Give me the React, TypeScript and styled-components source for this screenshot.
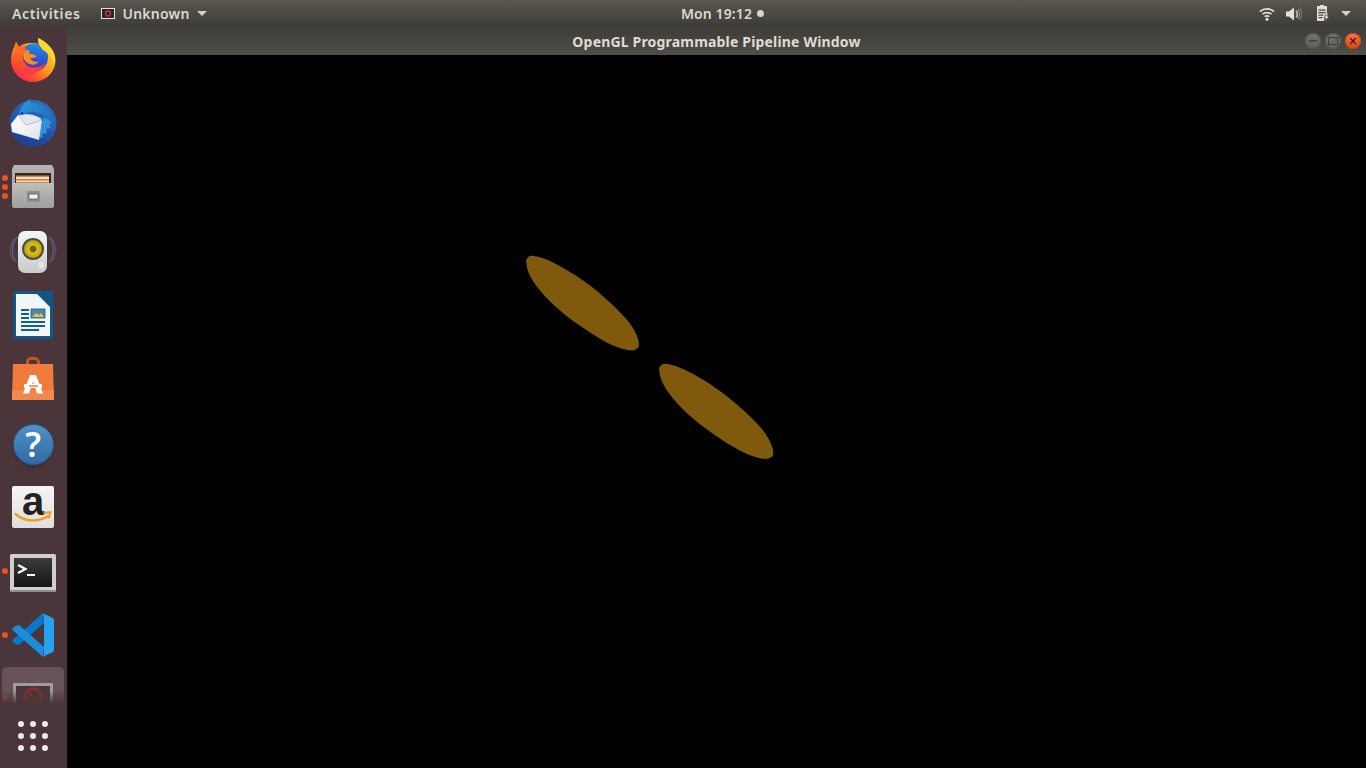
import React from 'react'
import styled, { createGlobalStyle } from 'styled-components'

const DOCK_BG = '#4a353a'

const GlobalStyle = createGlobalStyle`
  html, body {
    margin: 0;
    padding: 0;
    height: 100%;
    overflow: hidden;
    background: #000;
  }
  #root {
    height: 100%;
  }
`

const Desktop = styled.div`
  width: 1366px;
  height: 768px;
  display: flex;
  flex-direction: column;
  font-family: "Noto Sans", "Open Sans", sans-serif;
  overflow: hidden;
`

const TopBar = styled.header`
  height: 27px;
  flex: none;
  display: flex;
  align-items: center;
  background: linear-gradient(to bottom, #5a574f, #3c3b37);
  color: #dcd8d0;
  font-size: 14px;
  font-weight: 600;
`

const TopLeft = styled.div`
  flex: 0 0 681px;
  display: flex;
  align-items: center;
  padding-left: 12px;
  box-sizing: border-box;
`

const BarText = styled.span<{ $spacing?: number }>`
  letter-spacing: ${(p) => p.$spacing ?? 0.1}px;
  white-space: nowrap;
`

const AppMenu = styled.div`
  display: flex;
  align-items: center;
  gap: 7px;
  margin-left: 21px;
`

const Arrow = styled.span`
  width: 0;
  height: 0;
  border-left: 5px solid transparent;
  border-right: 5px solid transparent;
  border-top: 5px solid #d6d3cc;
`

const Clock = styled.div`
  display: flex;
  align-items: center;
  gap: 5px;
`

const Dot = styled.span`
  width: 7px;
  height: 7px;
  border-radius: 50%;
  background: #d8d6d1;
`

const TrayGroup = styled.div`
  margin-left: auto;
  display: flex;
  align-items: center;
  gap: 11px;
  padding-right: 15px;
`

const Body = styled.div`
  flex: 1;
  display: flex;
  min-height: 0;
`

const Dock = styled.nav`
  position: relative;
  flex: 0 0 67px;
  background: ${DOCK_BG};
  overflow: hidden;
`

const DockItem = styled.div<{ $active?: boolean }>`
  position: relative;
  height: 64px;
  margin: 0 3px 0 2px;
  display: flex;
  align-items: center;
  justify-content: center;
  border-radius: 5px;
  background: ${(p) => (p.$active ? '#665257' : 'transparent')};
  svg {
    display: block;
  }
`

const RunDots = styled.div`
  position: absolute;
  left: 0;
  top: 0;
  bottom: 0;
  display: flex;
  flex-direction: column;
  justify-content: center;
  gap: 3px;
`

const RunDot = styled.span<{ $dim?: boolean }>`
  width: 6px;
  height: 6px;
  border-radius: 50%;
  background: #e95420;
  opacity: ${(p) => (p.$dim ? 0.45 : 1)};
`

const HelpDisc = styled.div`
  width: 39px;
  height: 39px;
  margin-top: 2px;
  border-radius: 50%;
  display: flex;
  align-items: center;
  justify-content: center;
  background: linear-gradient(to bottom, #4f92c8, #2f6aa3);
  border: 1px solid #2a5a88;
  box-shadow: 0 3px 3px rgba(0, 0, 0, 0.12);
  color: #fff;
  font-size: 34px;
  font-weight: 600;
  line-height: 39px;
`

const AmazonTile = styled.div`
  position: relative;
  width: 42px;
  height: 42px;
  border-radius: 2px;
  display: flex;
  justify-content: center;
  background: linear-gradient(to bottom, #f4f4f2, #dededc);
  color: #222;
  font-family: "Liberation Sans", Arial, sans-serif;
  font-size: 40px;
  font-weight: 700;
  line-height: 30px;
`

const AmazonSmile = styled.svg`
  position: absolute;
  left: 0;
  top: 0;
`

const ShowApps = styled.div`
  position: absolute;
  left: 0;
  right: 0;
  bottom: 0;
  height: 78px;
  box-sizing: border-box;
  padding-top: 14px;
  display: flex;
  align-items: center;
  justify-content: center;
  background: linear-gradient(to bottom, rgba(74, 53, 58, 0) 0, ${DOCK_BG} 14px);
`

const AppGrid = styled.div`
  display: grid;
  grid-template-columns: repeat(3, 6px);
  grid-auto-rows: 6px;
  gap: 6px;
  margin-right: 1px;
`

const GridDot = styled.span`
  border-radius: 50%;
  background: #eceae7;
`

const Main = styled.main`
  flex: 1;
  display: flex;
  flex-direction: column;
  min-width: 0;
`

const TitleBar = styled.div`
  height: 28px;
  flex: none;
  display: grid;
  grid-template-columns: 1fr auto 1fr;
  align-items: center;
  background: linear-gradient(to bottom, #3d3c38, #504e47);
  color: #dfdbd2;
  font-size: 14px;
  font-weight: 700;
`

const Title = styled.span`
  grid-column: 2;
  white-space: nowrap;
  letter-spacing: 0.18px;
`

const WinButtons = styled.div`
  grid-column: 3;
  justify-self: end;
  display: flex;
  gap: 4px;
  padding-right: 5px;
`

const WinButton = styled.span<{ $close?: boolean }>`
  width: 16px;
  height: 16px;
  border-radius: 50%;
  display: flex;
  align-items: center;
  justify-content: center;
  box-shadow: inset 0 0 0 1px ${(p) => (p.$close ? '#c8431a' : '#55534d')};
  background: ${(p) =>
    p.$close
      ? 'linear-gradient(to bottom, #f5784a, #dc4414)'
      : 'linear-gradient(to bottom, #73716b, #5f5d57)'};
`

const Canvas = styled.div`
  flex: 1;
  background: #000;
  min-height: 0;
  svg {
    display: block;
    width: 100%;
    height: 100%;
  }
`

const Firefox = () => (
  <svg width="48" height="48" viewBox="0 0 48 48">
    <defs>
      <linearGradient id="ffBase" x1="0.85" y1="0.1" x2="0.2" y2="0.95">
        <stop offset="0" stopColor="#ffd42a" />
        <stop offset="0.5" stopColor="#ff9a1f" />
        <stop offset="0.8" stopColor="#ff4a2a" />
        <stop offset="1" stopColor="#f0286a" />
      </linearGradient>
      <linearGradient id="ffGlobe" x1="0.6" y1="0" x2="0.4" y2="1">
        <stop offset="0" stopColor="#1c8fe6" />
        <stop offset="0.55" stopColor="#2b55cf" />
        <stop offset="1" stopColor="#5a2bb0" />
      </linearGradient>
      <linearGradient id="ffFox" x1="0.3" y1="0" x2="0.5" y2="1">
        <stop offset="0" stopColor="#ff7a24" />
        <stop offset="0.6" stopColor="#ff5326" />
        <stop offset="1" stopColor="#fb3550" />
      </linearGradient>
    </defs>
    <path d="M29 3c6 3 11 7 14.500 12 3 5 3.500 10 2.500 15-2 9-11 17-22 17C12 47 2 37 2 25c0-5 1.500-10 3.500-14l1.500-4 3 5c3-2 7-4 12-4 3 0 6 0 8 1-1-2-1-4-1-6z" fill="url(#ffBase)" />
    <circle cx="25" cy="22.500" r="14" fill="url(#ffGlobe)" />
    <path d="M29 3c7 3 14 9 16 16 1 4 1 8 0 11-1-6-4-10-8-13-5-3-8-8-8-14z" fill="#ffd92c" />
    <path d="M7 7l3 5c2-2 4-3 6-3.500-1 3 0 6 2 8-2 1-4 3-4 6 0 5 4 10 11 10 5 0 9-2 11-5-2 7-9 12-16 12C11 40 5 32 5 24c0-6 1-12 2-17z" fill="url(#ffFox)" />
    <path d="M18 15c2 0 3 1 2.500 2.500l-1 1.500c3-.5 6 .5 8 2.500-2 1.500-4.500 2-6.500 1.500 1 3 5 4.500 9 3.500-2 3-6 4-9.500 2.500-4-1.500-6.500-5-6-9 .5-2.500 2-4 3.500-5z" fill="#ff8a24" />
  </svg>
)

const Thunderbird = () => (
  <svg width="48" height="48" viewBox="0 0 48 48">
    <defs>
      <linearGradient id="tbRing" x1="0.7" y1="0" x2="0.3" y2="1">
        <stop offset="0" stopColor="#2c6fc4" />
        <stop offset="1" stopColor="#1c3f8f" />
      </linearGradient>
      <linearGradient id="tbHead" x1="0" y1="0" x2="1" y2="1">
        <stop offset="0" stopColor="#2a9ad8" />
        <stop offset="1" stopColor="#1d5fb4" />
      </linearGradient>
      <linearGradient id="tbMail" x1="0" y1="0" x2="1" y2="1">
        <stop offset="0" stopColor="#ffffff" />
        <stop offset="1" stopColor="#dfe3ea" />
      </linearGradient>
    </defs>
    <circle cx="24" cy="24.500" r="23.500" fill="url(#tbRing)" />
    <path d="M10 17C10 9 15 3 22 0c-1 2-1 3 0 4 8 0 15 4 20 11 3 5 5 11 5 16l-5 2c1-7-2-13-8-17-7-4-15-4-24 1z" fill="url(#tbHead)" />
    <path d="M35 18l8 5-3 3 2 3-5 1 1 4-5 1 1 4-6-1-2-4 6-8z" fill="#3190dc" />
    <path d="M2 25l7-9 24 5-3 20L3 33z" fill="url(#tbMail)" />
    <path d="M9 16l8 10 16-5" fill="none" stroke="#a2a9b2" strokeWidth="0.800" />
    <path d="M10 17c7-3 15-2 23 3l-16 5z" fill="#e3e7ec" />
    <circle cx="13" cy="14" r="1" fill="#18263a" />
  </svg>
)

const FilesIcon = () => (
  <svg width="42" height="44" viewBox="0 0 42 44">
    <defs>
      <linearGradient id="fiBody" x1="0" y1="0" x2="0" y2="1">
        <stop offset="0" stopColor="#bdbdbb" />
        <stop offset="1" stopColor="#a0a09e" />
      </linearGradient>
      <linearGradient id="fiTop" x1="0" y1="0" x2="0" y2="1">
        <stop offset="0" stopColor="#b5b5b3" />
        <stop offset="1" stopColor="#8f8f8d" />
      </linearGradient>
    </defs>
    <path d="M2 0h38l2 4v36c0 2-1 3-3 3H3c-2 0-3-1-3-3V4z" fill="url(#fiTop)" />
    <rect x="3" y="8" width="36" height="11" fill="#2e2a2a" />
    <rect x="4" y="10.500" width="33" height="7" fill="#ee7b2e" />
    <rect x="4" y="12" width="33" height="2" fill="#f7ead8" />
    <rect x="4" y="15.500" width="33" height="2" fill="#f4d3a6" />
    <path d="M0 18h42v22c0 2-1 3-3 3H3c-2 0-3-1-3-3z" fill="url(#fiBody)" />
    <rect x="15" y="26" width="13" height="11" rx="1.500" fill="#8d8d8b" />
    <rect x="17" y="29" width="9" height="5" rx="1" fill="#f1f1ef" stroke="#5c5c5c" strokeWidth="0.800" />
  </svg>
)

const Rhythmbox = () => (
  <svg width="48" height="44" viewBox="0 0 48 44">
    <defs>
      <linearGradient id="rbBody" x1="0" y1="0" x2="0" y2="1">
        <stop offset="0" stopColor="#f4f7f7" />
        <stop offset="1" stopColor="#c9cbc8" />
      </linearGradient>
      <radialGradient id="rbCone">
        <stop offset="0" stopColor="#6b5f10" />
        <stop offset="0.3" stopColor="#6b5f10" />
        <stop offset="0.4" stopColor="#d9bf1c" />
        <stop offset="0.85" stopColor="#c4a914" />
        <stop offset="1" stopColor="#57522a" />
      </radialGradient>
    </defs>
    <g fill="none" stroke="#6d80b4" opacity="0.5">
      <path d="M8 8C2 15 2 27 8 34" strokeWidth="1.500" />
      <path d="M5 10C0 17 0 26 5 32" strokeWidth="1" />
      <path d="M40 8c6 7 6 19 0 26" strokeWidth="1.500" />
      <path d="M43 10c5 7 5 16 0 22" strokeWidth="1" />
    </g>
    <rect x="9" y="2" width="29" height="42" rx="7" fill="url(#rbBody)" />
    <circle cx="24" cy="20" r="11" fill="#4a4a44" />
    <circle cx="24" cy="20" r="9.500" fill="url(#rbCone)" />
    <circle cx="32" cy="36" r="4" fill="#e4e5e2" stroke="#bdbfbb" strokeWidth="0.600" />
  </svg>
)

const Writer = () => (
  <svg width="40" height="48" viewBox="0 0 40 48">
    <path d="M2 0h26l12 12v33c0 2-1 3-3 3H3c-2 0-3-1-3-3V2c0-1 1-2 2-2z" fill="#0f5788" />
    <path d="M3 3h21l13 13v29H3z" fill="#f3f6f8" />
    <path d="M28 0h11c1 0 1 1 1 1v11z" fill="#0f5788" />
    <g fill="#12608f">
      <rect x="8" y="18" width="8" height="2" />
      <rect x="8" y="22" width="8" height="2" />
      <rect x="8" y="26" width="8" height="2" />
      <rect x="8" y="30" width="24" height="2" />
      <rect x="8" y="34" width="24" height="2" />
      <rect x="8" y="38" width="18" height="2" />
    </g>
    <rect x="18" y="18" width="14" height="9" fill="#4b87ad" stroke="#155f90" strokeWidth="0.800" />
    <path d="M19 26l4-4 3 2 2-2 3 4z" fill="#e8c04a" />
  </svg>
)

const Software = () => (
  <svg width="42" height="44" viewBox="0 0 42 44">
    <defs>
      <linearGradient id="swBag" x1="0" y1="0" x2="0" y2="1">
        <stop offset="0" stopColor="#ee7d3f" />
        <stop offset="1" stopColor="#f07a38" />
      </linearGradient>
    </defs>
    <path d="M15.500 12V5c0-2 2-3.500 3.500-3.500h4c1.500 0 3.500 1.500 3.500 3.500v7" fill="none" stroke="#c9542a" strokeWidth="3" />
    <path d="M1 7h40l1 36H0z" fill="url(#swBag)" />
    <rect x="0" y="33" width="42" height="10" fill="#ef8a4c" />
    <path d="M18 18h6l7 18.500h-6l-4-12-4 12h-6z" fill="#fff" />
    <rect x="12" y="27" width="18" height="4" fill="#fff" />
    <rect x="17" y="28.300" width="9" height="1.400" fill="#ec7a3c" />
  </svg>
)

const AmazonMark = () => (
  <AmazonTile>
    a
    <AmazonSmile width="42" height="42" viewBox="0 0 42 42">
      <path d="M3.500 28c10 8.500 23 8 33 2" fill="none" stroke="#f79c1d" strokeWidth="2.400" strokeLinecap="round" />
      <path d="M31.500 27l7-1-1.500 6.500" fill="none" stroke="#f79c1d" strokeWidth="1.800" />
    </AmazonSmile>
  </AmazonTile>
)

const Terminal = () => (
  <svg width="46" height="44" viewBox="0 0 46 44">
    <defs>
      <linearGradient id="tmBg" x1="0" y1="0" x2="0" y2="1">
        <stop offset="0" stopColor="#3c3c3a" />
        <stop offset="1" stopColor="#151515" />
      </linearGradient>
    </defs>
    <g transform="translate(0 5)">
      <rect x="0" y="0" width="46" height="37" rx="1.500" fill="#cfcfcd" />
      <rect x="0" y="36" width="46" height="2" fill="#8f8f8d" />
      <rect x="4" y="4" width="38" height="29" fill="url(#tmBg)" />
      <path d="M8 11l7.500 4L8 19" fill="none" stroke="#fff" strokeWidth="2.200" />
      <rect x="17" y="20" width="8" height="2" fill="#fff" />
    </g>
  </svg>
)

const VSCode = () => (
  <svg width="42" height="44" viewBox="0 0 42 44">
    <path d="M3 31L0 27.500 31 0l1 10L7 32z" fill="#0a78c8" />
    <path d="M3 13L0 16.500 31 44l1-10L7 12z" fill="#1a8ddb" />
    <path d="M30 0l10 4.500c1 .5 2 1.500 2 3v29c0 1.500-1 2.500-2 3L30 44c1-1 2-2 2-3.500v-37C32 2 31 1 30 0z" fill="#24a2ee" />
  </svg>
)

const WindowApp = () => (
  <svg width="40" height="32" viewBox="0 0 40 32">
    <rect x="0" y="0" width="40" height="32" fill="#9f9d9b" />
    <rect x="3" y="3" width="34" height="29" fill="#46383a" />
    <circle cx="20" cy="14" r="8.500" fill="none" stroke="#85302c" strokeWidth="3" />
    <path d="M14 8l12 12" stroke="#85302c" strokeWidth="3" />
  </svg>
)

const MenuIcon = () => (
  <svg width="14" height="11" viewBox="0 0 14 11">
    <rect x="0.500" y="0.500" width="13" height="10" fill="#2c2527" stroke="#e6e3de" />
    <circle cx="7" cy="5.500" r="2.500" fill="none" stroke="#c23a36" strokeWidth="1.300" />
  </svg>
)

const Wifi = () => (
  <svg width="16" height="14" viewBox="0 0 16 14">
    <g fill="none" stroke="#e4e1da" strokeWidth="1.700">
      <path d="M1 4.500C5 1 11 1 15 4.500" />
      <path d="M3.500 7.200C6 5 10 5 12.500 7.200" />
      <path d="M5.700 9.700C7 8.700 9 8.700 10.300 9.700" />
    </g>
    <circle cx="8" cy="12.300" r="1.500" fill="#e4e1da" />
  </svg>
)

const Speaker = () => (
  <svg width="16" height="14" viewBox="0 0 16 14">
    <path d="M0 4.500h3L8 0.500v13l-5-4H0z" fill="#e4e1da" />
    <path d="M10 3.500c1.500 2 1.500 5 0 7" fill="none" stroke="#d0cdc6" strokeWidth="1.400" />
    <path d="M12 2c2 3 2 7 0 10" fill="none" stroke="#8a8880" strokeWidth="1.300" />
    <path d="M14 .8c2.500 4 2.500 8.400 0 12.400" fill="none" stroke="#77756e" strokeWidth="1.200" />
  </svg>
)

const Battery = () => (
  <svg width="17" height="17" viewBox="0 0 17 17">
    <path d="M4 1h3V0h4v1h3v9h-2l-1 6H4z" fill="#e0ddd6" />
    <g fill="#45433e">
      <rect x="5.500" y="4.500" width="7" height="1.200" />
      <rect x="5.500" y="7" width="7" height="1.200" />
      <rect x="5.500" y="9.500" width="5" height="1.200" />
      <rect x="5.500" y="12" width="4" height="1.200" />
    </g>
    <path d="M14 8l-3 5h2l-1 4 4-6h-2l2-3z" fill="#e0ddd6" stroke="#45433e" strokeWidth="0.600" />
  </svg>
)

const MinGlyph = () => (
  <svg width="10" height="10" viewBox="0 0 10 10">
    <rect x="1" y="4" width="8" height="1.500" fill="#3d3c38" />
  </svg>
)

const MaxGlyph = () => (
  <svg width="10" height="10" viewBox="0 0 10 10">
    <rect x="0.500" y="1.500" width="9" height="7" fill="none" stroke="#3d3c38" />
  </svg>
)

const CloseGlyph = () => (
  <svg width="10" height="10" viewBox="0 0 10 10">
    <path d="M2 2l6 6M8 2l-6 6" stroke="#3a2016" strokeWidth="1.300" />
  </svg>
)

const petal = 'M526.300 260C527.500 256.500 530 255.300 533 255.700C540 256.500 546 259 553 262.500C564 268 574 274 583 280.500C593 287.500 602 295 610 302.500C618 310 625 317 630 323.500C634 329 637 335 638.500 340.500C639 343 639 345 638.500 347.500C636 349.500 634 350.500 631.500 350.500C625 350 619 348 613 345.500C604 341.500 595 336 587 330.500C577 324 568 317.500 560 310.500C552 304 545 296.500 540 290.500C535 284.500 531 278.500 528.500 272.500C527 268 526 264 526.300 260Z'

const apps = [
  { name: 'firefox', icon: <Firefox />, dots: 0 },
  { name: 'thunderbird', icon: <Thunderbird />, dots: 0 },
  { name: 'files', icon: <FilesIcon />, dots: 3 },
  { name: 'rhythmbox', icon: <Rhythmbox />, dots: 0 },
  { name: 'writer', icon: <Writer />, dots: 0 },
  { name: 'software', icon: <Software />, dots: 0 },
  { name: 'help', icon: <HelpDisc>?</HelpDisc>, dots: 0 },
  { name: 'amazon', icon: <AmazonMark />, dots: 0 },
  { name: 'terminal', icon: <Terminal />, dots: 1 },
  { name: 'vscode', icon: <VSCode />, dots: 1 },
  { name: 'window', icon: <WindowApp />, dots: 1, active: true },
]

function App() {
  return (
    <Desktop>
      <GlobalStyle />
      <TopBar>
        <TopLeft>
          <BarText $spacing={0.6}>Activities</BarText>
          <AppMenu>
            <MenuIcon />
            <BarText $spacing={0.25}>Unknown</BarText>
            <Arrow />
          </AppMenu>
        </TopLeft>
        <Clock>
          <BarText>Mon 19:12</BarText>
          <Dot />
        </Clock>
        <TrayGroup>
          <Wifi />
          <Speaker />
          <Battery />
          <Arrow />
        </TrayGroup>
      </TopBar>
      <Body>
        <Dock>
          {apps.map((app) => (
            <DockItem key={app.name} $active={app.active}>
              {app.dots > 0 && (
                <RunDots>
                  {Array.from({ length: app.dots }).map((_, i) => (
                    <RunDot key={i} $dim={app.active} />
                  ))}
                </RunDots>
              )}
              {app.icon}
            </DockItem>
          ))}
          <ShowApps>
            <AppGrid>
              {Array.from({ length: 9 }).map((_, i) => (
                <GridDot key={i} />
              ))}
            </AppGrid>
          </ShowApps>
        </Dock>
        <Main>
          <TitleBar>
            <Title>OpenGL Programmable Pipeline Window</Title>
            <WinButtons>
              <WinButton><MinGlyph /></WinButton>
              <WinButton><MaxGlyph /></WinButton>
              <WinButton $close><CloseGlyph /></WinButton>
            </WinButtons>
          </TitleBar>
          <Canvas>
            <svg viewBox="67 55 1299 713">
              <path d={petal} fill="#7f5a0d" />
              <path d={petal} fill="#7f5a0d" transform="translate(659 363.500) scale(1.012 1.006) translate(-526 -255.500)" />
            </svg>
          </Canvas>
        </Main>
      </Body>
    </Desktop>
  )
}

export default App
